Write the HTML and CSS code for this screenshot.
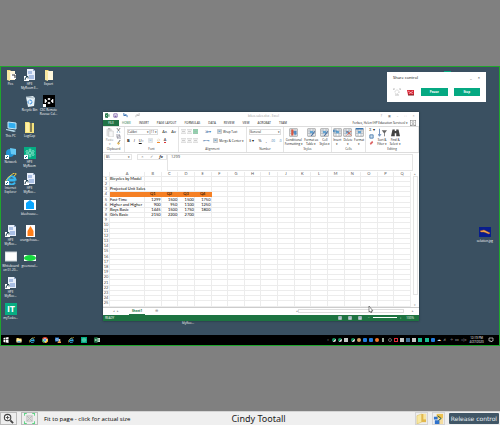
FILE: index.html
```html
<!DOCTYPE html>
<html lang="en">
<head>
<meta charset="utf-8">
<title>Cindy Tootall</title>
<link rel="stylesheet" href="styles.css">
</head>
<body>
<svg class="defs" aria-hidden="true">
  <symbol id="doc" viewBox="0 0 12 12"><path d="M3 0h6l2 2v9H3z" fill="#e8effa"/><path d="M4 2h4v3H4zM5 6h5v4H5z" fill="#a9bfe4"/><path d="M9 0l2 2H9z" fill="#91a7cc"/><path d="M0 7h5v5H0z" fill="#fff"/><path d="M1 11q0-3 2-3M2 7.500h2v2" fill="none" stroke="#245" stroke-width="1"/></symbol>
  <symbol id="folder" viewBox="0 0 12 12"><path d="M2 1h3l1 1h4v9H2z" fill="#f0d675"/><path d="M4 2h6v9H5z" fill="#fff8dd"/><path d="M2 1l3 2v9l-3-1z" fill="#f8e8a2"/></symbol>
  <symbol id="explorer" viewBox="0 0 12 12"><path d="M1 2h4l1 1h5v8H1z" fill="#f7dc75"/><path d="M1 5h10v4H1z" fill="#fff0b0"/><path d="M3 8h6v3H3z" fill="#64b5dd"/></symbol>
  <symbol id="ie" viewBox="0 0 12 12"><path d="M10.500 7.500H4M10 9.500A4 4 0 1 1 10.500 6.500H4" fill="none" stroke="#37b6ef" stroke-width="2"/><path d="M1 11Q-1 8 5 3T11 1Q11 2 9 3" fill="none" stroke="#f4cf42" stroke-width="1"/></symbol>
  <symbol id="room" viewBox="0 0 12 12"><path d="M0 0h12v12H0z" fill="#05ac83"/><g fill="none" stroke="#a5f0d8" stroke-width=".7"><circle cx="6" cy="6" r="1.500"/><circle cx="6" cy="3" r="1"/><circle cx="6" cy="9" r="1"/><circle cx="3" cy="4.500" r="1"/><circle cx="9" cy="4.500" r="1"/><circle cx="3" cy="7.500" r="1"/><circle cx="9" cy="7.500" r="1"/></g></symbol>
  <symbol id="excel" viewBox="0 0 12 12"><path d="M5 2h7v8H5z" fill="#e5f4eb"/><path d="M7 4h4M7 6h4M7 8h4" stroke="#207345"/><path d="M0 1l7-1v12l-7-1z" fill="#207345"/><path d="M2 4l3 4M5 4L2 8" stroke="#fff"/></symbol>
  <symbol id="sheet" viewBox="0 0 12 12"><path d="M1 1h10v10H1z" fill="#fff" stroke="#8b8b8b"/><path d="M1 4h10M1 7h10M4 1v10M8 1v10" stroke="#9caab5"/><path d="M4 4h4v3H4z" fill="#62a3d1"/></symbol>
  <symbol id="lines" viewBox="0 0 6 6"><path d="M0 1h6M1 3h4M0 5h6" stroke="#aaa" stroke-width=".7" fill="none"/></symbol>
</svg>

<main class="stage">
  <section class="desktop" aria-label="Shared desktop">
    <div class="surface">
      <div class="shortcuts">
        <ul>
          <li><svg><use href="#folder"/><path d="M6 5h5v5H6z" fill="#fff"/><path d="M7 6h3v3" stroke="#333" fill="none"/></svg><span>Pics</span></li>
          <li class="skip"><svg viewBox="0 0 12 12"><path d="M3 1l8 1v6l-8-1z" fill="#31aef0" stroke="#c7e9fa"/><path d="M1 8l7 1 3 1-2 1-8-2z" fill="#b5d9ea"/></svg><span>This PC</span></li>
          <li><svg viewBox="0 0 12 12"><circle cx="5" cy="6" r="4" fill="#2395d6"/><path d="M5 1l6 1v6L6 7z" fill="#66c9f4"/><path d="M0 8h4v4H0z" fill="#fff"/><path d="M1 11l2-2" stroke="#168"/></svg><span>Network</span></li>
          <li><svg viewBox="0 0 12 12"><use href="#ie"/><path d="M0 8h4v4H0z" fill="#fff"/><path d="M1 11l2-2" stroke="#168"/></svg><span>Internet<br>Explorer</span></li>
          <li class="skip"><svg><use href="#doc"/></svg><span>HPE<br>MyRoo...</span></li>
          <li><svg viewBox="0 0 12 12"><path d="M0 1h12v9H0z" fill="#fff" stroke="#ccd3d8"/></svg><span>Whiteboard<br>on 01-20...</span></li>
          <li><svg><use href="#doc"/></svg><span>HPE<br>MyRoo...</span></li>
          <li><svg viewBox="0 0 12 12"><path d="M0 0h12v12H0z" fill="#08ad83"/><text x="6" y="9" text-anchor="middle" class="it">IT</text></svg><span>myTasks...</span></li>
        </ul>
        <ul>
          <li><svg><use href="#doc"/></svg><span>HPE<br>MyRoom E...</span></li>
          <li><svg viewBox="0 0 12 12"><path d="M2 2l7-1 2 2-1 8-6 1z" fill="#e6f1f7"/><path d="M2 2l8 1" stroke="#a7b8c2"/><circle cx="6" cy="7" r="2" fill="none" stroke="#3489db" stroke-width="1" stroke-dasharray="3 1"/></svg><span>Recycle Bin</span></li>
          <li><svg viewBox="0 0 12 12"><path d="M1 1h4l1 1h4v10H1z" fill="#f5e37e"/><path d="M6 2h2v9H6z" fill="#867e53"/><path d="M2 2h3v9H2z" fill="#fff0a5"/></svg><span>LogiCap</span></li>
          <li><svg viewBox="0 0 12 12"><use href="#room"/><path d="M0 8h4v4H0z" fill="#fff"/><path d="M1 11l2-2" stroke="#168"/></svg><span>HPE<br>MyRoom</span></li>
          <li><svg><use href="#doc"/></svg><span>HPE<br>MyRoo...</span></li>
          <li><svg viewBox="0 0 12 12"><path d="M0 1h12v10H0z" fill="#fff"/><path d="M2 4l4-3 4 3v6H2z" fill="#0aa6ff"/></svg><span>bluehouse...</span></li>
          <li><svg viewBox="0 0 12 12"><path d="M2 0h9v12H2z" fill="#fff"/><path d="M6.500 1l3 5v5h-6V6z" fill="#ff7e18"/></svg><span>orangehous...</span></li>
          <li><svg viewBox="0 0 12 12"><path d="M0 4h12v6H0z" fill="#fff"/><ellipse cx="6" cy="7" rx="6" ry="3" fill="#17d83f"/></svg><span>greenoval...</span></li>
        </ul>
        <ul>
          <li><svg><use href="#folder"/></svg><span>Export</span></li>
          <li><svg viewBox="0 0 12 12"><path d="M0 0h12v12H0z" fill="#000"/><path d="M2 4l2 2-2 2zM10 4L8 6l2 2zM5 3.500h2v1H5zM5 7.500h2v1H5z" fill="#fff" stroke="#fff" stroke-width=".6"/><path d="M0 9h3v3H0z" fill="#fff"/></svg><span>CSC Remote<br>Rescue Cal...</span></li>
        </ul>
      </div>
      <div class="shortcut solution"><svg viewBox="0 0 12 12"><path d="M0 1h12v10H0z" fill="#081d8d"/><path d="M1 5l4-1 6 3-1 1-5-2H2z" fill="#f6bd52" stroke="#c65327" stroke-width=".5"/></svg><span>solution.jpg</span></div>
      <span class="stray">MyRoo...</span>
      <span class="peek"></span>

      <article class="excel">
        <header class="titlebar">
          <svg class="s5"><use href="#excel"/></svg>
          <svg class="s5" viewBox="0 0 6 6"><path d="M1 1h4v4H1z" fill="#fff" stroke="#8065ad"/><path d="M2 3h2v2H2z" fill="#8065ad"/></svg>
          <svg class="s5 undo" viewBox="0 0 6 6"><path d="M1 0v3h3M1 3q4-3 4 2" fill="none" stroke="#2d6ab0"/></svg>
          <svg class="s5 redo" viewBox="0 0 6 6"><path d="M5 0v3H2M5 3q-4-3-4 2" fill="none" stroke="#bbb"/></svg>
          <span class="doc-name">bikes-sales.xlsx - Excel</span>
          <span class="win">?</span><span class="win">▣</span><span class="win">–</span><span class="win">□</span><span class="win">×</span>
        </header>
        <nav class="tabs">
          <a class="file" href="#f">FILE</a><a class="on" href="#h">HOME</a><a href="#i">INSERT</a><a href="#p">PAGE LAYOUT</a><a href="#m">FORMULAS</a><a href="#d">DATA</a><a href="#r">REVIEW</a><a href="#v">VIEW</a><a href="#a">ACROBAT</a><a href="#t">TEAM</a>
          <span class="user">Forbes, Helen (HP Education Services) ▾</span>
          <svg class="avatar" viewBox="0 0 6 6"><path d="M0 0h6v6H0z" fill="#fff" stroke="#777"/><circle cx="3" cy="2.500" r="1" fill="none" stroke="#777" stroke-width=".5"/><path d="M1 6q2-4 4 0" fill="none" stroke="#777" stroke-width=".5"/></svg>
        </nav>
        <div class="ribbon">
          <section class="g-clip"><div class="body">
            <div class="big faint"><svg viewBox="0 0 12 12"><path d="M2 1h7v10H2z" fill="#ddd"/><path d="M5 4h6v8H5z" fill="#f8f8f8" stroke="#ccc"/><path d="M4 0h3v2H4z" fill="#bbb"/></svg><span>Paste<br>▾</span></div>
            <div class="stack"><svg viewBox="0 0 6 6"><path d="M1 0l3 4M5 0L2 4" stroke="#777"/><path d="M1 5h1M4 5h1" stroke="#4584b9"/></svg><svg viewBox="0 0 6 6"><path d="M1 0h3v4H1zM2 2h3v4H2z" fill="#fff" stroke="#778" stroke-width=".6"/></svg><svg viewBox="0 0 6 6"><path d="M1 4l2-2 2 2-2 2z" fill="#e6bd65"/><path d="M3 3l2-3" stroke="#555"/></svg></div>
          </div><h2>Clipboard</h2></section>
          <section class="g-font"><div class="body rows">
            <div class="row"><span class="box name">Calibri<i>▾</i></span><span class="box size">11<i>▾</i></span><span class="glyph">A˄</span><span class="glyph">A˅</span></div>
            <div class="row"><b class="glyph">B</b><em class="glyph">I</em><u class="glyph">U</u><span class="soft">▾</span><svg class="s5 pale"><use href="#sheet"/></svg><span class="glyph fill">◇</span><span class="glyph ink">A</span></div>
          </div><h2>Font</h2></section>
          <section class="g-align"><div class="body rows">
            <div class="row"><svg class="s5"><use href="#lines"/></svg><svg class="s5"><use href="#lines"/></svg><svg class="s5 picked"><use href="#lines"/></svg><span class="angle">≫▾</span><svg class="s5"><use href="#sheet"/></svg><span>Wrap Text</span></div>
            <div class="row"><svg class="s5"><use href="#lines"/></svg><svg class="s5"><use href="#lines"/></svg><svg class="s5"><use href="#lines"/></svg><span class="indent">⇤⇥</span><svg class="s5"><use href="#sheet"/></svg><span>Merge &amp; Center ▾</span></div>
          </div><h2>Alignment</h2></section>
          <section class="g-num"><div class="body rows">
            <div class="row"><span class="box fmt">General<i>▾</i></span></div>
            <div class="row"><span class="glyph">$ ▾</span><span class="glyph">%</span><span class="glyph">,</span><span class="blue">.00</span><span class="blue">.0</span></div>
          </div><h2>Number</h2></section>
          <section class="g-style"><div class="body spread">
            <div class="big"><svg viewBox="0 0 12 12"><use href="#sheet"/><path d="M3 2h3v8H3z" fill="#d95741"/><path d="M7 4h3v5H7z" fill="#5289c1"/></svg><span>Conditional<br>Formatting ▾</span></div>
            <div class="big"><svg viewBox="0 0 12 12"><use href="#sheet"/><path d="M5 10l5-6 1 1-5 6z" fill="#416ba0"/></svg><span>Format as<br>Table ▾</span></div>
            <div class="big"><svg viewBox="0 0 12 12"><use href="#sheet"/><path d="M5 10l5-6 1 1-5 6z" fill="#416ba0"/></svg><span>Cell<br>Styles ▾</span></div>
          </div><h2>Styles</h2></section>
          <section class="g-cells"><div class="body spread">
            <div class="big"><svg viewBox="0 0 12 12"><use href="#sheet"/><path d="M0 4h6M3 2L0 4l3 2" stroke="#387db7" fill="none"/></svg><span>Insert<br>▾</span></div>
            <div class="big"><svg viewBox="0 0 12 12"><use href="#sheet"/><path d="M5 4l6 6M11 4l-6 6" stroke="#d64a2b"/></svg><span>Delete<br>▾</span></div>
            <div class="big"><svg viewBox="0 0 12 12"><use href="#sheet"/><path d="M1 1h10" stroke="#3c77b0" stroke-width="2"/></svg><span>Format<br>▾</span></div>
          </div><h2>Cells</h2></section>
          <section class="g-edit"><div class="body spread">
            <div class="stack"><span class="sigma">Σ ▾</span><svg viewBox="0 0 6 6"><path d="M1 1h4v4H1z" fill="#cde" stroke="#47a"/></svg><svg viewBox="0 0 6 6"><path d="M1 4l3-3 1 2-3 3z" fill="#d66"/></svg></div>
            <div class="big"><svg viewBox="0 0 12 12"><path d="M2 1v9M0 8l2 3 2-3" fill="none" stroke="#466fa8"/><path d="M5 3h7L9 7v4H8V7z" fill="#666"/></svg><span>Sort &amp;<br>Filter ▾</span></div>
            <div class="big"><svg viewBox="0 0 12 12"><path d="M2 2h3v2h2V2h3l2 9H7V7H5v4H0z" fill="#444"/></svg><span>Find &amp;<br>Select ▾</span></div>
          </div><h2>Editing</h2></section>
        </div>
        <div class="formula">
          <span class="ref">B5<i>▾</i></span>
          <span class="ops"><span>×</span><span>✓</span><em>fx</em></span>
          <input class="value" aria-label="Formula bar" value="1299">
        </div>
        <div class="grid">
          <div class="cells"><table><colgroup><col class="num"><col class="first"></colgroup><tbody id="cells"></tbody></table></div>
          <div class="vscroll"><span>▴</span><i></i><span>▾</span></div>
        </div>
        <div class="sheets"><span class="arrows">◂ &nbsp; ▸</span><a href="#s">Sheet1</a><span class="add">⊕</span><div class="hscroll"><span>◂</span><i></i><span>▸</span></div></div>
        <footer class="status"><span>READY</span><div><svg class="view"><use href="#sheet"/></svg><svg><use href="#sheet"/></svg><svg><use href="#sheet"/></svg><span>−</span><i class="zoomline"></i><span>+</span><span class="pct">100%</span></div></footer>
      </article>

      <aside class="share">
        <header><h1>Share control</h1><span>_</span><span>×</span></header>
        <div class="actions">
          <svg viewBox="0 0 8 8"><g fill="none" stroke="#aaa" stroke-width=".7"><path d="M0 2V1h2M6 1h2v1M2 7h4"/><circle cx="4" cy="4" r="2" stroke-dasharray="1 1"/></g></svg>
          <svg viewBox="0 0 8 8"><path d="M0 2h7v5H1z" fill="#d82435"/><path d="M1 3l5 3M6 3L2 6" stroke="#fff" stroke-width=".5"/><path d="M1 7h6" stroke="#722"/></svg>
          <button>Pause</button><button>Stop</button>
        </div>
      </aside>
      <svg class="cursor" viewBox="0 0 6 8"><path d="M1 0v6l1-1 1 2 1-1-1-1h2z" fill="#fff" stroke="#444" stroke-width=".6"/></svg>
    </div>
    <footer class="taskbar">
      <div class="apps">
        <svg viewBox="0 0 12 12"><path d="M1 2l4-1v4H1zM6 1l5-1v5H6zM1 6h4v5l-4-1zM6 6h5v6l-5-1z" fill="#fff"/></svg>
        <svg><use href="#explorer"/></svg>
        <svg><use href="#ie"/></svg>
        <svg viewBox="0 0 12 12"><circle cx="6" cy="6" r="6" fill="#e54835"/><path d="M0 4a6 6 0 0 0 6 8V6z" fill="#35a853"/><path d="M6 12a6 6 0 0 0 6-8H6z" fill="#fbc72f"/><circle cx="6" cy="6" r="3" fill="#4387ee" stroke="#fff"/></svg>
        <svg viewBox="0 0 12 12"><path d="M0 1h8v8H0z" fill="#2676c9"/><circle cx="4" cy="5" r="2" fill="none" stroke="#fff"/><circle cx="9" cy="6" r="2" fill="#f6d7ae"/><path d="M5 12q0-4 4-4t3 4z" fill="#e7a24c"/></svg>
        <svg><use href="#ie"/></svg>
        <svg><use href="#room"/></svg>
        <svg><use href="#excel"/></svg>
      </div>
      <div class="tray">
        <span class="gray">«</span><i class="green"></i><i class="green"></i><i class="light"></i><i class="green"></i><i class="tan"></i><i class="azure"></i><i class="azure"></i><i class="orange"></i><i class="slim"></i><i class="ring"></i><i class="red"></i><i class="light"></i><i class="steel"></i><i class="light"></i><i class="teal"></i><i class="teal"></i><i class="azure"></i><span>☁</span><span>♬</span><span class="gray">✧</span><span>▭</span><span>◁»</span>
        <time>12:19 PM<br>4/27/2020</time><svg class="note" viewBox="0 0 6 6"><path d="M1 1h4v3H4L3 5V4H1z" fill="none" stroke="#ddd" stroke-width=".7"/></svg>
      </div>
    </footer>
  </section>
</main>

<footer class="bar">
  <button class="tool" aria-label="Zoom"><svg viewBox="0 0 12 12"><circle cx="5" cy="5" r="3.500" fill="#fff" stroke="#444" stroke-width="1.200"/><path d="M3 5h4M5 3v4" stroke="#444"/><path d="M8 8l3 3" stroke="#444" stroke-width="2"/></svg></button>
  <div class="left">
    <button class="tool" aria-label="Fit to page"><svg viewBox="0 0 12 12"><path d="M3 3h6v6H3z" fill="#ddd" stroke="#aaa" stroke-width=".5"/><path d="M3 3l6 6M9 3L3 9" stroke="#bbb"/><path d="M0 3V0h3M9 0h3v3M12 9v3H9M3 12H0V9" fill="none" stroke="#5bd583" stroke-width="2"/></svg></button>
    <span class="hint">Fit to page - click for actual size</span>
  </div>
  <strong>Cindy Tootall</strong>
  <div class="right">
    <button class="small" aria-label="Files"><svg viewBox="0 0 12 12"><path d="M1 3l5-2v9l-5 2z" fill="#f8e8a0" stroke="#d6b44c" stroke-width=".5"/><path d="M6 1h5v9H6z" fill="#e2b84c"/><path d="M8 1h3v6H8z" fill="#f7e5a1"/></svg></button>
    <button class="small" aria-label="Transfer"><svg viewBox="0 0 12 12"><path d="M4 1h7v5H4z" fill="#edc250"/><path d="M6 6h5v6H6z" fill="#f5dda0"/><path d="M1 4h4v3H1zM2 8h5v4H2z" fill="#2f72cc"/><path d="M5 3l4 3-3 2" fill="none" stroke="#254" stroke-width="1"/></svg></button>
    <button class="release">Release control</button>
  </div>
</footer>
<script src="sheet.js"></script>
</body>
</html>
```
FILE: styles.css
```css
* { box-sizing: border-box; }
body { margin: 0; min-height: 100vh; display: flex; flex-direction: column; font: 3px/4px "Open Sans", sans-serif; color: #111; }
ul { list-style: none; margin: 0; padding: 0; }
h1, h2 { margin: 0; font-weight: 400; font-size: 3px; }
i { font-style: normal; }
a { color: inherit; text-decoration: none; }
button { font: inherit; border: 0; padding: 0; margin: 0; }
svg { display: block; flex: none; }
.defs { position: absolute; width: 0; height: 0; }
.s5 { width: 5px; height: 5px; }
.pale { opacity: .5; }

.stage { flex: 1; display: flex; align-items: center; background: #808080; }
.desktop { flex: 1; height: 280px; display: flex; flex-direction: column; border: 1px solid #1fa52d; background: #3a5061; }
.surface { flex: 1; position: relative; }

.shortcuts { display: flex; padding-top: 2px; }
.shortcuts ul { width: 19px; }
.shortcuts li, .shortcut { height: 26px; display: flex; flex-direction: column; align-items: center; color: #fff; text-align: center; white-space: nowrap; }
.shortcuts .skip { margin-top: 26px; }
.shortcuts svg, .shortcut svg { width: 12px; height: 12px; margin-bottom: 1px; }
.it { font: 700 9px "Open Sans", sans-serif; fill: #fff; }
.solution { position: absolute; right: 6px; top: 159px; }
.stray { position: absolute; left: 181px; top: 254px; color: #fff; }
.peek { position: absolute; right: 48px; top: 4px; width: 7px; height: 4px; background: #05ac83; }

.excel { position: absolute; left: 102px; top: 45px; width: 316px; height: 209px; display: flex; flex-direction: column; background: #fff; box-shadow: 0 0 2px #1c2c36; }
.titlebar { height: 8px; display: flex; align-items: center; gap: 3px; padding: 0 3px 0 2px; color: #888; }
.undo { margin-left: 2px; }
.redo { margin-left: 4px; }
.doc-name { flex: 1; text-align: center; color: #999; padding-left: 8px; }
.win { width: 5px; text-align: center; }
.tabs { height: 6px; display: flex; align-items: stretch; gap: 8px; line-height: 6px; white-space: nowrap; padding-right: 3px; }
.file { width: 16px; background: #217346; color: #fff; text-align: center; margin-right: -5px; }
.on { color: #217346; }
.user { margin-left: auto; margin-right: -6px; }
.avatar { width: 6px; height: 6px; }

.ribbon { height: 27px; display: flex; border-top: 1px solid #ddd; border-bottom: 1px solid #ddd; white-space: nowrap; }
.ribbon section { flex: none; display: flex; flex-direction: column; border-right: 1px solid #e4e4e4; }
.ribbon h2 { text-align: center; color: #333; line-height: 5px; }
.ribbon .g-clip { width: 22px; }
.ribbon .g-font { width: 54px; }
.ribbon .g-align { width: 68px; }
.ribbon .g-num { width: 37px; }
.ribbon .g-style { width: 48px; }
.ribbon .g-cells { width: 34px; }
.ribbon .g-edit { flex: 1; }
.body { flex: 1; display: flex; padding: 1px 2px 0; }
.rows { flex-direction: column; gap: 1px; }
.spread { justify-content: space-around; padding: 1px 0 0; }
.g-edit .body { padding-right: 16px; }
.row { display: flex; align-items: center; gap: 4px; height: 8px; }
.glyph { font-size: 4px; }
.g-align .row { gap: 1px; }
.g-align .indent, .g-align .angle { width: 17px; text-align: center; color: #4a79aa; font-size: 4px; }
.big { display: flex; flex-direction: column; align-items: center; text-align: center; }
.big svg { width: 9px; height: 9px; margin-bottom: 1px; }
.faint { color: #888; }
.stack { display: flex; flex-direction: column; gap: 1px; padding-left: 2px; }
.stack svg { width: 5px; height: 5px; }
.sigma { height: 5px; font-size: 4px; }
.box { display: flex; justify-content: space-between; border: 1px solid #ddd; height: 6px; line-height: 4px; }
.name { width: 28px; }
.size { width: 10px; margin-left: -4px; }
.fmt { width: 34px; }
.soft { color: #999; margin-left: -4px; }
.fill { border-bottom: 1px solid #f28a2d; color: #b78645; }
.ink { border-bottom: 1px solid #d33; }
.picked { background: #8edbb1; }
.blue { color: #3975ae; }

.formula { height: 19px; display: flex; align-items: flex-start; padding: 1px 6px 1px 1px; }
.ref { width: 28px; height: 6px; display: flex; justify-content: space-between; border: 1px solid #e4e4e4; padding: 0 1px; }
.ops { width: 30px; margin-left: 5px; height: 6px; display: flex; justify-content: space-around; border: 1px solid #e4e4e4; color: #777; font-size: 4px; }
.ops em { color: #333; font-weight: 700; }
.value { flex: 1; min-width: 0; height: 17px; margin: 0; border: 1px solid #e4e4e4; padding: 0 3px 11px; font: inherit; font-size: 4px; color: #444; }

.grid { flex: 1; display: flex; min-height: 0; }
.cells { flex: 1; }
table { width: 100%; height: 100%; table-layout: fixed; border-collapse: separate; border-spacing: 0; font: 4px/4px Lato, sans-serif; color: #000; }
.num { width: 7px; }
.first { width: 35px; }
th, td { padding: 0; height: 5px; border-right: 1px solid #ececec; border-bottom: 1px solid #ececec; text-align: right; white-space: nowrap; }
th { font-weight: 400; text-align: center; color: #555; }
.words { text-align: left; }
.quarter { background: #f58025; border-color: #f58025; text-align: center; }
.vscroll { width: 8px; display: flex; flex-direction: column; align-items: center; color: #999; }
.vscroll i { flex: 1; width: 5px; border: 1px solid #e4e4e4; margin-bottom: 8px; }

.sheets { height: 8px; display: flex; align-items: center; border-top: 1px solid #ccc; color: #888; padding-right: 5px; }
.arrows { width: 26px; text-align: center; }
.sheets a { width: 16px; text-align: center; color: #217346; font-weight: 700; border-bottom: 1px solid #217346; line-height: 6px; }
.add { width: 22px; text-align: center; font-size: 4px; }
.hscroll { width: 118px; margin-left: auto; display: flex; align-items: center; justify-content: space-between; }
.hscroll i { flex: 1; height: 4px; border: 1px solid #ddd; margin-right: 8px; }
.status { height: 6px; display: flex; justify-content: space-between; align-items: center; background: #1d7341; color: #fff; padding: 0 5px 0 2px; }
.status div { display: flex; align-items: center; gap: 3px; }
.status svg { width: 4px; height: 4px; margin-right: 3px; }
.zoomline { width: 24px; height: 1px; background: linear-gradient(90deg, #fff 48%, #1d7341 48% 52%, #fff 52%); }
.pct { margin-left: 2px; }

.share { position: absolute; right: 13px; top: 5px; width: 99px; height: 30px; background: #fff; padding: 3px 6px; }
.share header { display: flex; gap: 6px; line-height: 6px; font-size: 4px; }
.share h1 { flex: 1; font-size: 4px; color: #000; }
.actions { display: flex; align-items: center; gap: 6px; margin-top: 7px; }
.actions svg { width: 8px; height: 8px; }
.actions button { flex: 1; height: 8px; background: #05a982; color: #fff; font-weight: 700; }
.cursor { position: absolute; left: 367px; top: 239px; width: 6px; height: 8px; }

.taskbar { height: 10px; display: flex; justify-content: space-between; align-items: center; background: #000; color: #ddd; }
.apps { display: flex; gap: 7px; padding-left: 2px; }
.apps svg { width: 6px; height: 6px; }
.tray { width: 173px; display: flex; align-items: center; justify-content: space-between; padding-right: 5px; }
.tray > span { width: 4px; height: 4px; text-align: center; font-size: 4px; }
.tray > i { width: 4px; height: 4px; }
.tray .gray { color: #999; }
.tray .green { background: linear-gradient(135deg, #15945e 60%, #ddd 60%); border-radius: 2px; }
.tray .light { background: #c2c8c5; }
.tray .tan { background: #d4a366; border-radius: 2px; }
.tray .azure { background: #207cdd; border-radius: 1px; }
.tray .orange { background: #f27628; border-radius: 2px; }
.tray .slim { background: linear-gradient(90deg, #000 25%, #9caf9d 25% 75%, #000 75%); }
.tray .ring { border: 1px solid #666; border-radius: 2px; }
.tray .red { border: 1px solid #e02d38; }
.tray .steel { background: #3e6c91; }
.tray .teal { background: #17bc91; }
.tray time { width: 18px; text-align: center; white-space: nowrap; color: #fff; }
.note { width: 6px; height: 6px; }

.bar { height: 14px; display: grid; grid-template-columns: 17px 1fr auto 1fr; align-items: center; background: #efefef; border-top: 1px solid #d4d4d4; color: #222; white-space: nowrap; }
.tool, .small { display: flex; align-items: center; justify-content: center; height: 13px; background: #eee; border: 1px solid #bbb; }
.tool { width: 17px; }
.tool svg, .small svg { width: 11px; height: 11px; }
.left { display: flex; align-items: center; gap: 6px; padding-left: 4px; }
.hint { font-size: 6px; line-height: 12px; color: #000; }
.bar strong { font: 9px/12px "Noto Sans", sans-serif; }
.right { display: flex; align-items: center; justify-content: flex-end; gap: 4px; padding-right: 1px; }
.small { width: 13px; border-color: #d4d4d4; }
.release { height: 11px; padding: 0 2px; background: #405666; color: #e8eef2; border-radius: 1px; font: 6px/11px "DejaVu Sans", sans-serif; }
```
FILE: sheet.js
```js
const rows = {
  1: ["Bicycles by Model"],
  3: ["Projected Unit Sales"],
  4: ["", "Q1", "Q2", "Q3", "Q4"],
  5: ["Fast-Time", 1299, 1500, 1500, 1750],
  6: ["Higher and Higher", 900, 950, 1100, 1250],
  7: ["Boys Basic", 1445, 1500, 1750, 1800],
  8: ["Girls Basic", 2150, 2200, 2700]
};
const letters = "ABCDEFGHIJKLMNOPQ";
const body = document.getElementById("cells");
for (let r = 0; r <= 25; r++) {
  const tr = body.insertRow();
  const head = document.createElement("th");
  head.textContent = r || "";
  tr.append(head);
  for (let c = 0; c < letters.length; c++) {
    const cell = document.createElement(r ? "td" : "th");
    cell.textContent = r ? ((rows[r] || [])[c] ?? "") : letters[c];
    if (r && c === 0) cell.className = "words";
    if (r === 4 && c < 5) cell.className = "quarter";
    tr.append(cell);
  }
}
```
